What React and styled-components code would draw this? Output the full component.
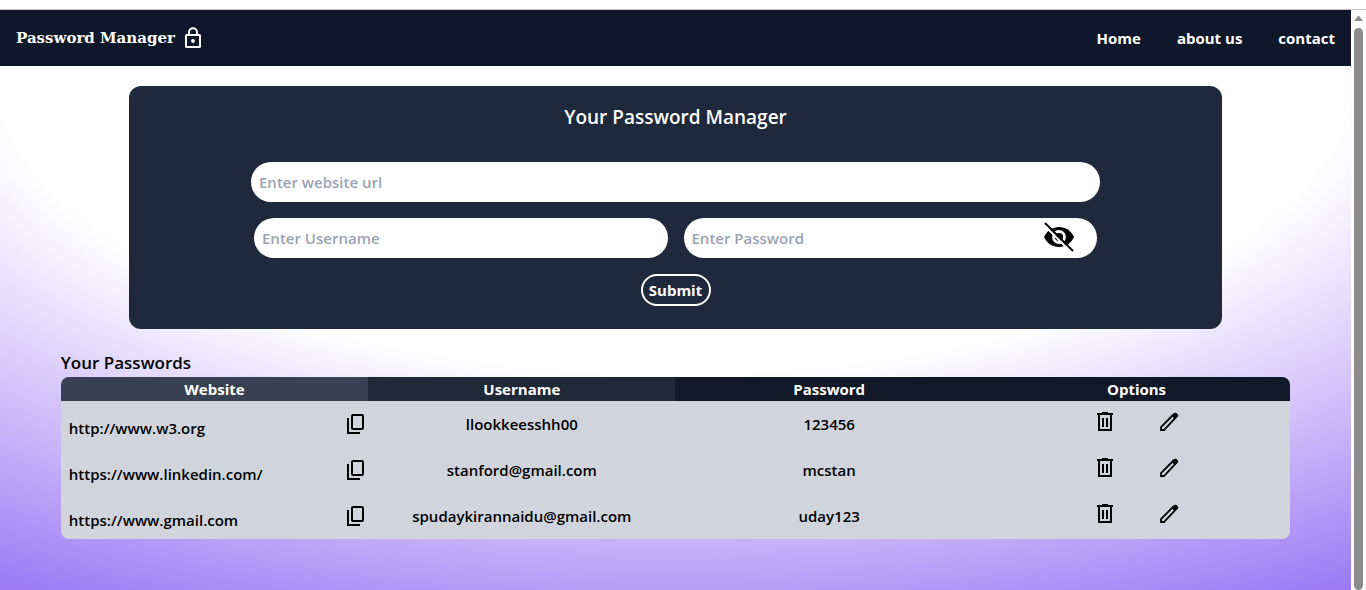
import React from "react";
import styled, { createGlobalStyle } from "styled-components";

const GlobalStyle = createGlobalStyle`
  *, *::before, *::after { box-sizing: border-box; }
  html, body { margin: 0; }
  body {
    font-family: "Open Sans", "Noto Sans", sans-serif;
    font-size: 15px;
    font-weight: 600;
    line-height: 24px;
    color: #000;
    background: #fff;
  }
  button, input { font: inherit; }
`;

const Screen = styled.div`
  display: flex;
  flex-direction: column;
  min-height: 100vh;
`;

const TopEdge = styled.div`
  height: 10px;
  border-bottom: 1px solid #c4c4c4;
  background: #fff;
`;

const Viewport = styled.div`
  flex: 1;
  display: flex;
`;

const Page = styled.div`
  flex: 1;
  min-width: 0;
  background: radial-gradient(125% 125% at 50% 10%, #fff 40%, #6633ee 100%) 0 0 / 100% calc(100% + 24px) no-repeat;
`;

const ScrollTrack = styled.div`
  width: 15px;
  display: flex;
  flex-direction: column;
  align-items: center;
  gap: 7px;
  padding-top: 6px;
  background: #fcfcfc;
`;

const ScrollArrow = styled.svg`
  display: block;
  width: 9px;
  height: 5px;
  fill: #8b8b8b;
`;

const ScrollThumb = styled.div`
  flex: 1;
  width: 9px;
  border-radius: 5px;
  background: #8b8b8b;
`;

const Header = styled.header`
  display: flex;
  align-items: center;
  justify-content: space-between;
  height: 56px;
  padding: 0 16px;
  color: #fff;
  background: #0f172a;
`;

const Brand = styled.div`
  display: flex;
  align-items: center;
  gap: 6px;
  font-family: "DejaVu Serif", serif;
  font-size: 15px;
  font-weight: 700;
`;

const Nav = styled.nav`
  display: flex;
  gap: 36px;
`;

const NavLink = styled.a`
  color: inherit;
  font-weight: 700;
  text-decoration: none;
`;

const Icon = styled.svg`
  display: block;
  width: ${(p) => p.$size || 24}px;
  height: ${(p) => p.$size || 24}px;
  fill: none;
  stroke: currentColor;
  stroke-width: 2;
`;

const Card = styled.section`
  margin: 20px 129px 0;
  padding: 16px 0 23px;
  border-radius: 12px;
  color: #fff;
  background: #1e293b;
`;

const CardTitle = styled.h1`
  margin: 0;
  font-size: 19px;
  font-weight: 600;
  line-height: 30px;
  text-align: center;
`;

const Form = styled.form`
  display: flex;
  flex-direction: column;
  gap: 16px;
  margin-top: 30px;
  padding: 0 122px;
`;

const FieldRow = styled.div`
  display: flex;
  gap: 16px;
  padding: 0 3px;
`;

const Field = styled.label`
  flex: 1;
  display: flex;
  align-items: center;
  height: 40px;
  min-width: 0;
  padding: 0 22px 2px 8px;
  border-radius: 20px;
  color: #000;
  background: #fff;
`;

const Input = styled.input`
  flex: 1;
  min-width: 0;
  height: 38px;
  padding: 2px 0 0;
  border: 0;
  outline: 0;
  background: transparent;
  &::placeholder { color: #9ca3af; opacity: 1; }
`;

const IconButton = styled.button`
  display: block;
  padding: 0;
  border: 0;
  color: inherit;
  background: none;
  cursor: pointer;
`;

const SubmitButton = styled.button`
  align-self: center;
  height: 32px;
  width: 70px;
  padding: 0;
  border: 2px solid #fff;
  border-radius: 16px;
  color: #fff;
  background: transparent;
  font-weight: 700;
  cursor: pointer;
`;

const Vault = styled.section`
  width: 91%;
  margin: 22px auto 0;
`;

const VaultTitle = styled.h2`
  margin: 0;
  padding-bottom: 2px;
  font-size: 17px;
  font-weight: 600;
  line-height: 24px;
`;

const Table = styled.table`
  width: 100%;
  table-layout: fixed;
  border-collapse: collapse;
  border-radius: 8px;
  overflow: hidden;
  background: #d1d5db;
`;

const HeadCell = styled.th`
  height: 24px;
  padding: 0;
  color: #fff;
  background: ${(p) => p.$tone};
  font-weight: 700;
`;

const Cell = styled.td`
  height: 46px;
  padding: 0;
  text-align: center;
`;

const Site = styled.div`
  display: flex;
  align-items: flex-start;
  justify-content: space-between;
  padding: 4px 0 0 8px;
`;

const SiteLink = styled.a`
  padding-top: 4px;
  color: inherit;
  text-decoration: none;
`;

const Actions = styled.div`
  display: flex;
  justify-content: center;
  gap: 40px;
  padding-bottom: 4px;
`;

const LockIcon = () => (
  <Icon viewBox="0 0 24 24" aria-hidden="true">
    <rect x="5" y="9" width="14" height="12" rx="0.5" />
    <path d="M8 9V6.200a4 4 0 0 1 8 0V9" />
    <circle cx="12" cy="15" r="1.900" fill="currentColor" stroke="none" />
  </Icon>
);

const EyeOffIcon = () => (
  <Icon $size={32} viewBox="0 0 32 32" aria-hidden="true">
    <path
      d="M1 16C4 9.500 9.500 6 16 6s12 3.500 15 10c-3 6.500-8.500 10-15 10S4 22.500 1 16Z"
      fill="#000"
      stroke="none"
    />
    <circle cx="16" cy="16" r="5.500" stroke="#fff" strokeWidth="2.800" />
    <path d="M0 3 28 31" stroke="#fff" strokeWidth="2" />
    <path d="M2 2 30 30" stroke="#000" strokeWidth="2" />
  </Icon>
);

const CopyIcon = () => (
  <Icon viewBox="0 0 24 24" aria-hidden="true">
    <rect x="8" y="3" width="11" height="14" rx="1" />
    <path d="M4 6v15h12" />
  </Icon>
);

const TrashIcon = () => (
  <Icon viewBox="0 0 24 24" aria-hidden="true">
    <path d="M4 4h16M9 3h6M6 4v16h12V4M10 8v9M14 8v9" />
  </Icon>
);

const PencilIcon = () => (
  <Icon viewBox="0 0 24 24" aria-hidden="true">
    <path d="M4 20v-3L16.500 4.500a1.800 1.800 0 0 1 2.600 2.600L7 20Z" strokeWidth="1.800" />
    <path d="m15 6 2-2a2 2 0 0 1 3 3l-2 2Z" fill="currentColor" strokeWidth="1" />
  </Icon>
);

const columns = [
  { name: "Website", tone: "#374151" },
  { name: "Username", tone: "#1f2937" },
  { name: "Password", tone: "#111827" },
  { name: "Options", tone: "#111827" },
];

const entries = [
  { site: "http://www.w3.org", user: "llookkeesshh00", password: "123456" },
  { site: "https://www.linkedin.com/", user: "stanford@gmail.com", password: "mcstan" },
  { site: "https://www.gmail.com", user: "spudaykirannaidu@gmail.com", password: "uday123" },
];

export default function App() {
  return (
    <Screen>
      <GlobalStyle />
      <TopEdge />
      <Viewport>
        <Page>
          <Header>
            <Brand>
              Password Manager
              <LockIcon />
            </Brand>
            <Nav>
              <NavLink href="#home">Home</NavLink>
              <NavLink href="#about">about us</NavLink>
              <NavLink href="#contact">contact</NavLink>
            </Nav>
          </Header>
          <main>
            <Card>
              <CardTitle>Your Password Manager</CardTitle>
              <Form onSubmit={(e) => e.preventDefault()}>
                <Field>
                  <Input type="text" placeholder="Enter website url" aria-label="Website url" />
                </Field>
                <FieldRow>
                  <Field>
                    <Input type="text" placeholder="Enter Username" aria-label="Username" />
                  </Field>
                  <Field>
                    <Input type="password" placeholder="Enter Password" aria-label="Password" />
                    <IconButton type="button" aria-label="Show password">
                      <EyeOffIcon />
                    </IconButton>
                  </Field>
                </FieldRow>
                <SubmitButton type="submit">Submit</SubmitButton>
              </Form>
            </Card>
            <Vault>
              <VaultTitle>Your Passwords</VaultTitle>
              <Table>
                <thead>
                  <tr>
                    {columns.map((c) => (
                      <HeadCell key={c.name} $tone={c.tone} scope="col">
                        {c.name}
                      </HeadCell>
                    ))}
                  </tr>
                </thead>
                <tbody>
                  {entries.map((e) => (
                    <tr key={e.site}>
                      <Cell>
                        <Site>
                          <SiteLink href={e.site}>{e.site}</SiteLink>
                          <IconButton type="button" aria-label="Copy website">
                            <CopyIcon />
                          </IconButton>
                        </Site>
                      </Cell>
                      <Cell>{e.user}</Cell>
                      <Cell>{e.password}</Cell>
                      <Cell>
                        <Actions>
                          <IconButton type="button" aria-label="Delete">
                            <TrashIcon />
                          </IconButton>
                          <IconButton type="button" aria-label="Edit">
                            <PencilIcon />
                          </IconButton>
                        </Actions>
                      </Cell>
                    </tr>
                  ))}
                </tbody>
              </Table>
            </Vault>
          </main>
        </Page>
        <ScrollTrack aria-hidden="true">
          <ScrollArrow viewBox="0 0 9 5">
            <path d="M0 5 4 0h1l4 5Z" />
          </ScrollArrow>
          <ScrollThumb />
        </ScrollTrack>
      </Viewport>
    </Screen>
  );
}
